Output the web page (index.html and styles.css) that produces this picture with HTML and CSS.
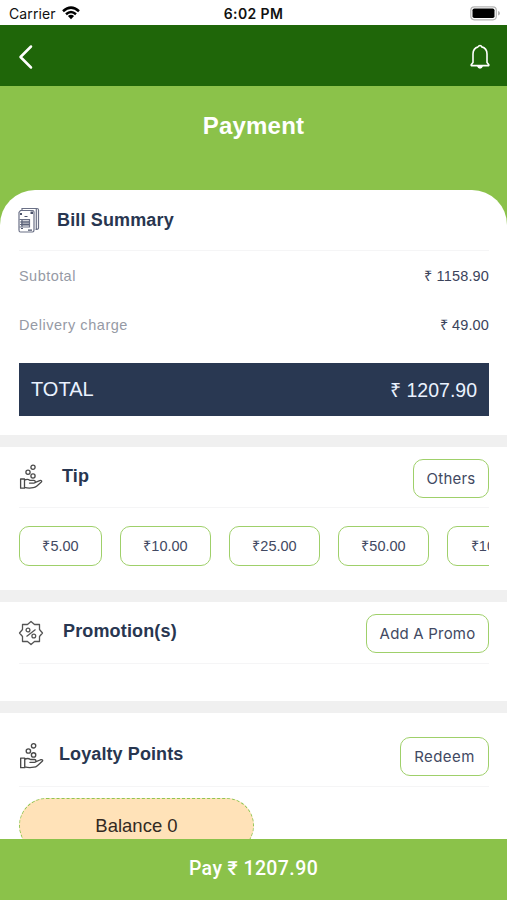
FILE: index.html
```html
<!DOCTYPE html>
<html lang="en">
<head>
<meta charset="utf-8">
<title>Payment</title>
<link rel="stylesheet" href="styles.css">
</head>
<body>
<svg class="defs" aria-hidden="true">
  <symbol id="hand" viewBox="0 0 24 26">
    <g fill="none" stroke="#4a4a4a" stroke-width="1.3" stroke-linejoin="round" stroke-linecap="round">
      <circle cx="14" cy="3.200" r="2.100"/><circle cx="9" cy="8.200" r="2.100"/><circle cx="14" cy="12" r="2.100"/>
      <path d="M1.600 15h3.900v9.200H1.600zM5.500 16.200c2.200-1.300 4-1 5.500.2h3.800c2 0 2 2.600.1 2.700H10.500M16.400 18.400l4.300-1.800c1.700-.5 2.700.7 1.400 1.700l-4.500 4c-1 .9-2 1.300-3.300 1.400-3 .6-6 .5-8.800-.3"/>
    </g>
  </symbol>
</svg>
<div class="screen">
  <div class="status">
    <div class="carrier"><span>Carrier</span>
      <svg width="18" height="14" viewBox="0 0 18 14"><g fill="none" stroke="#000" stroke-width="2.500"><path d="M1 5.200Q9-2 17 5.200M4 8.200Q9 3.900 14 8.200"/></g><path d="M5.900 10Q9 7.400 12.100 10L9 13.300z"/></svg>
    </div>
    <span class="clock">6:02 PM</span>
    <svg class="battery" width="31" height="15" viewBox="0 0 31 15"><rect x=".8" y=".8" width="25.500" height="13" rx="3.500" fill="#fff" stroke="#b5b5b5" stroke-width="1.200"/><rect x="2.500" y="2.500" width="22" height="9.600" rx="1.800"/><path d="M28 5v4.600q2-.6 2-2.300T28 5" fill="#b5b5b5"/></svg>
  </div>
  <header class="bar">
    <svg width="16" height="26" viewBox="0 0 16 26"><path d="M13 2.500 2.500 13 13 23.500" fill="none" stroke="#fff" stroke-width="2.500" stroke-linecap="round" stroke-linejoin="round"/></svg>
    <svg width="20" height="26" viewBox="0 0 20 26"><path d="M8.300 2.900a1.750 1.750 0 0 1 3.400 0C15.400 3.800 17 6.500 17 10v8.500l1.800 2.200v.9H1.200v-.9L3 18.500V10c0-3.500 1.600-6.200 5.300-7.100" fill="none" stroke="#fff" stroke-width="1.600" stroke-linejoin="round"/><path d="M7 22h6q-.8 2.700-3 2.700T7 22" fill="#fff"/></svg>
  </header>
  <main class="content">
    <h1 class="title">Payment</h1>
    <section class="sheet">
      <div class="head head-bill">
        <svg class="icon" width="22" height="26" viewBox="0 0 22 26"><g fill="none" stroke="#6a7086" stroke-width="1.200"><path d="M4 3V1.500h15q1.500 0 1.500 1.500v18q0 1.500-3 1.500M18.300 2v21"/><path d="M2.500 3.500h12q1.500 0 1.500 1.500v18q0 2-1.500 2h-12Q1 25 1 23V5.500z" fill="#fff"/><path d="M1.500 12.500h10v7.500h-10M2 15h9.500M2 17.500h9.500M4 12.500V20"/></g><path d="M3 13.500h8v5.500H3z" fill="#4b536b" opacity=".5"/><path d="M12.500 4.500H15v2.500h-2.500zM2 6h2v2H2zM6.500 9h3v1h-3zM3 21h2v1H3zM10 22.500h4v1.200h-4z" fill="#4b536b"/></svg>
        <h2>Bill Summary</h2>
      </div>
      <div class="line"><span class="label">Subtotal</span><span class="amount">₹ 1158.90</span></div>
      <div class="line"><span class="label delivery">Delivery charge</span><span class="amount">₹ 49.00</span></div>
      <div class="total"><span>TOTAL</span><span class="sum">₹ 1207.90</span></div>
    </section>
    <section class="card tip">
      <div class="head">
        <svg class="icon" width="24" height="26"><use href="#hand"/></svg>
        <h2>Tip</h2>
        <button class="btn others">Others</button>
      </div>
      <div class="chips">
        <button class="chip first">₹5.00</button><button class="chip">₹10.00</button><button class="chip">₹25.00</button><button class="chip">₹50.00</button><button class="chip last">₹100.00</button>
      </div>
    </section>
    <section class="card promo">
      <div class="head">
        <svg class="icon" width="26" height="26" viewBox="0 0 26 26"><g fill="none" stroke="#555" stroke-width="1.300" stroke-linejoin="round"><path d="M13 1.500l3.500 3h5v5l3 3.500-3 3.500v5h-5l-3.500 3-3.500-3h-5v-5L1.500 13l3-3.500v-5h5z"/><circle cx="10" cy="10" r="1.900"/><circle cx="15.800" cy="16" r="1.900"/><path d="M17.500 9.500 8.500 16.500"/></g></svg>
        <h2>Promotion(s)</h2>
        <button class="btn add">Add A Promo</button>
      </div>
    </section>
    <section class="card loyalty">
      <div class="head">
        <svg class="icon" width="25" height="28"><use href="#hand"/></svg>
        <h2>Loyalty Points</h2>
        <button class="btn redeem">Redeem</button>
      </div>
      <div class="balance">Balance 0</div>
    </section>
  </main>
  <footer class="pay">Pay ₹ 1207.90</footer>
</div>
</body>
</html>
```
FILE: styles.css
```css
* { box-sizing: border-box; }
body { margin: 0; background: #fff; font-family: "Liberation Sans", Arial, sans-serif; color: #283650; }
.defs { display: none; }
svg { display: block; flex: none; }
h1, h2 { margin: 0; }
.screen { width: 507px; height: 900px; display: flex; flex-direction: column; overflow: hidden; }

.status { height: 25px; flex: none; display: grid; grid-template-columns: 1fr auto 1fr; align-items: center; padding: 1px 6px 0 9px; color: #111; font: 14px Inter, sans-serif; }
.carrier { display: flex; align-items: center; gap: 6px; letter-spacing: .1px; }
.clock { margin-left: -3px; font-weight: 600; letter-spacing: .4px; }
.battery { justify-self: end; }

.bar { height: 61px; flex: none; display: flex; align-items: center; justify-content: space-between; padding: 3px 17px 0 18px; background: #1f6609; }

.content { flex: 1; min-height: 0; overflow: hidden; background: linear-gradient(#8bc24a 0 200px, #fff 200px); }
.title { height: 104px; padding-top: 25px; text-align: center; color: #fff; font: 700 24px/30px "Liberation Sans", sans-serif; letter-spacing: .2px; }
.sheet { height: 245px; padding: 0 18px 0 19px; background: #fff; border-radius: 35px 35px 0 0; }
.head { display: flex; align-items: center; border-bottom: 1px solid #f5f5f6; }
.head h2 { font-size: 18px; line-height: 22px; letter-spacing: .15px; }
.head-bill { height: 61px; }
.head-bill .icon { margin-left: -1px; }
.head-bill h2 { margin-left: 17px; margin-bottom: 1px; }
.line { height: 49px; display: flex; align-items: center; justify-content: space-between; font-size: 14.5px; }
.label { color: #969aa5; letter-spacing: .45px; }
.label.delivery { letter-spacing: .55px; }
.amount { margin-bottom: 2px; color: #3b435b; letter-spacing: .15px; }
.total { height: 53px; margin-top: 14px; padding: 0 12px; display: flex; align-items: center; justify-content: space-between; background: #293852; color: #eaf2ff; font-size: 20px; }
.total .sum { font-size: 19.5px; letter-spacing: 0; }

.card { background: #fff; border-top: 12px solid #f0f0f0; padding: 0 18px 0 19px; }
.tip { height: 155px; }
.tip .head { height: 61px; }
.tip h2 { margin: 0 0 3px 19px; }
.btn, .chip { height: 39px; flex: none; border: 1.5px solid #9fd06a; border-radius: 10px; background: #fff; color: #424962; font: 15px Inter, sans-serif; padding: 0; text-align: center; white-space: nowrap; }
.btn { margin-left: auto; margin-top: 2px; letter-spacing: .2px; }
.others { width: 76px; }
.chips { display: flex; gap: 18px; margin-top: 18px; overflow: hidden; }
.chip { width: 91px; height: 40px; padding-bottom: 2px; font: 14.5px "Liberation Sans", sans-serif; }
.chip.first { width: 83px; }
.chip.last { width: 100px; }
.promo { height: 111px; }
.promo .head { height: 62px; }
.promo .icon { margin-left: -1px; }
.promo h2 { margin: 0 0 3px 19px; letter-spacing: .15px; }
.add { width: 123px; }
.loyalty { height: 200px; }
.loyalty .head { height: 74px; padding-top: 13px; }
.loyalty .btn { margin-top: 1px; letter-spacing: .45px; }
.loyalty h2 { margin: 0 0 4px 15px; letter-spacing: .1px; }
.redeem { width: 89px; }
.balance { width: 235px; height: 55px; margin-top: 11px; border: 1.5px dashed #91c552; border-radius: 28px; background: #ffe2b8; color: #332a22; font-size: 18.500px; line-height: 53px; text-align: center; }
.pay { height: 61px; flex: none; background: #8bc24a; color: #fff; text-align: center; font: 500 19.500px/60px Roboto, sans-serif; letter-spacing: .4px; }
```
